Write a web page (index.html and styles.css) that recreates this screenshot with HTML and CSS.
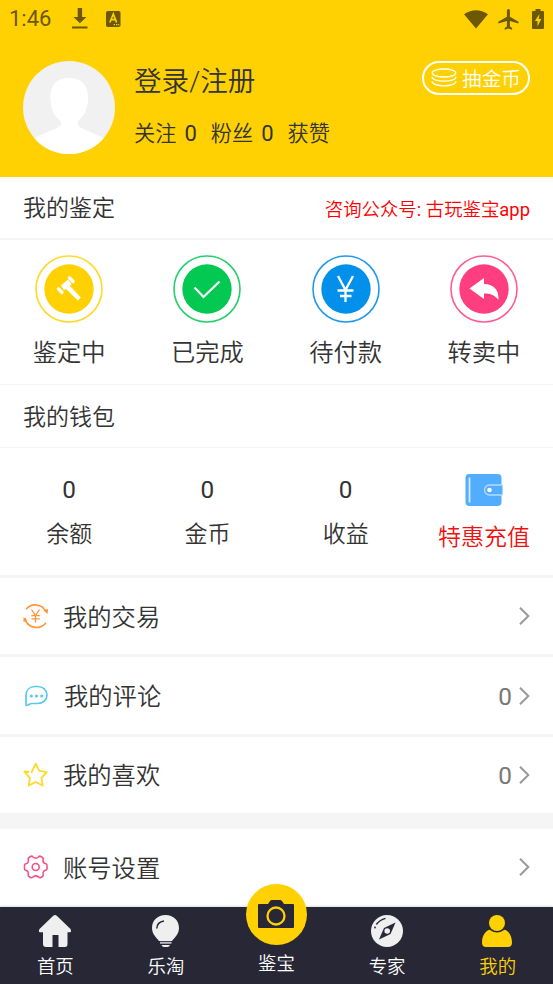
FILE: index.html
```html
<!DOCTYPE html>
<html lang="zh-CN">
<head>
<meta charset="utf-8">
<title>我的</title>
<link rel="stylesheet" href="styles.css">
</head>
<body>
<div class="app">
  <header class="header">
    <div class="status">
      <span class="time">1:46</span>
      <svg class="download" width="16" height="22" viewBox="0 0 16 22"><path d="M5.700 0h4.400v9h4.300L7.900 15.300 1.500 9h4.200zM0 18.500h15.500v2H0z" fill="#6b5800"/></svg>
      <svg class="lang" width="15" height="17" viewBox="0 0 15 17"><rect width="14.500" height="16" rx="1.800" fill="#6b5800"/><path d="M3.900 11.500 7.300 3l3.300 8.500M5.200 8.700h4.200" fill="none" stroke="#ffd103" stroke-width="1.700"/><path d="M7.700 13h1.300v1.300H7.700zM10 13h1.300v1.300H10zM12.200 13h1v1.300h-1z" fill="#ffd103"/></svg>
      <svg class="wifi" width="24" height="19" viewBox="0 0 24 19"><path d="M0 4.200Q12-3.800 24 4.200L12 18.500z" fill="#6b5800"/></svg>
      <svg class="plane" width="21" height="21" viewBox="0 0 21 21"><path d="M8.900 1.600a1.500 1.500 0 0 1 3 0v6.100l8.600 5v1.900l-8.600-2.500v5.300l2.200 1.600v1.700l-3.700-1.100-3.700 1.100V19l2.200-1.600v-5.300L.3 14.600v-1.900l8.600-5z" fill="#6b5800"/></svg>
      <svg class="battery" width="12" height="21" viewBox="0 0 12 21"><path d="M3.500 0h5v2H11q1 0 1 1v16q0 1-1 1H1q-1 0-1-1V3q0-1 1-1h2.500z" fill="#6b5800"/><path d="M7.500 5 2.800 12h2.700v5.300L9.300 10H6.700z" fill="#ffd103"/></svg>
    </div>
    <div class="profile">
      <svg class="avatar" width="92" height="93" viewBox="0 0 92 93"><defs><clipPath id="face"><ellipse cx="46" cy="46.500" rx="46" ry="46.500"/></clipPath></defs><g clip-path="url(#face)"><path d="M0 0h92v93H0z" fill="#f1f1f1"/><path d="M46 17c14 0 20 9 19 22-.5 9-4 16-9.500 20.500-2 4 0 6 3 7.500 8 4 15 6 24 11v15H8V80c7-6 17-8.500 26-13 4-2 5-4 3-7.500C31 55 28 48 27.500 39 26.500 26 32 17 46 17z" fill="#fff"/></g></svg>
      <div class="identity">
        <div class="login">登录/注册</div>
        <div class="counts"><span>关注<b>0</b></span><span>粉丝<b>0</b></span><span>获赞</span></div>
      </div>
      <div class="draw">
        <svg width="26" height="20" viewBox="0 0 26 20" fill="none" stroke="#fff" stroke-width="1.300"><ellipse cx="13" cy="5" rx="11.800" ry="4"/><path d="M1 8.700c0 6 24 6 24 0M1 13.200c0 6.200 24 6.200 24 0"/></svg>
        <span>抽金币</span>
      </div>
    </div>
  </header>

  <section class="title appraisal"><h2>我的鉴定</h2><span class="notice">咨询公众号<b>: </b>古玩鉴宝<b>app</b></span></section>
  <section class="statuses">
    <div class="state"><svg width="68" height="68" viewBox="0 0 68 68"><circle cx="34" cy="34" r="33" fill="none" stroke="#ffd926" stroke-width="1.600"/><circle cx="34" cy="34" r="24.700" fill="#ffd103"/><path d="m26 30.500 7-6 3.500 4.500-1.500 2L45.800 42.500l-3 3L31 34l-2 1z" fill="#fff"/><path d="m34.500 22.800 3.500 3.700M23.500 33.800l3.500 3.700" stroke="#fff" stroke-width="3.400" stroke-linecap="round"/></svg><span>鉴定中</span></div>
    <div class="state"><svg width="68" height="68" viewBox="0 0 68 68"><circle cx="34" cy="34" r="33" fill="none" stroke="#25cf6b" stroke-width="1.600"/><circle cx="34" cy="34" r="24.700" fill="#03c953"/><path d="m21.500 32.500 9 9.500 16-15.500" fill="none" stroke="#fff" stroke-width="2.200"/></svg><span>已完成</span></div>
    <div class="state"><svg width="68" height="68" viewBox="0 0 68 68"><circle cx="34" cy="34" r="33" fill="none" stroke="#2099ec" stroke-width="1.600"/><circle cx="34" cy="34" r="24.700" fill="#0390ea"/><path d="m26 21 7.500 14L41 21M33.500 34v13M25.500 35.500h16M28 41h11.500" fill="none" stroke="#fff" stroke-width="2.300"/></svg><span>待付款</span></div>
    <div class="state"><svg width="68" height="68" viewBox="0 0 68 68"><circle cx="34" cy="34" r="33" fill="none" stroke="#ff5b91" stroke-width="1.600"/><circle cx="34" cy="34" r="24.700" fill="#ff3e80"/><path d="M19.500 33.500 34 23v6c9 0 15 5 14.500 16-4-5-7.500-6.500-14.500-6.500V44z" fill="#fff"/></svg><span>转卖中</span></div>
  </section>

  <section class="title wallet-title"><h2>我的钱包</h2></section>
  <section class="wallet">
    <div class="amount"><b>0</b><span>余额</span></div>
    <div class="amount"><b>0</b><span>金币</span></div>
    <div class="amount"><b>0</b><span>收益</span></div>
    <div class="recharge"><svg width="38" height="34" viewBox="0 0 38 34"><rect x=".5" y="1" width="36" height="32" rx="4" fill="#53adff"/><path d="M4.500 4.500v25" stroke="#d5ebff" stroke-width="1.800"/><path d="M37.500 12H24.500a5 5 0 0 0 0 10H37.500" fill="#53adff" stroke="#b8dcff" stroke-width="1.300"/><circle cx="24.500" cy="17" r="2.300" fill="#fff"/></svg><span>特惠充值</span></div>
  </section>

  <section class="menu">
    <div class="row"><svg class="icon" width="26" height="26" viewBox="0 0 26 26" fill="none" stroke="#ff9537" stroke-width="1.600"><path d="M3 6.300a12 12 0 0 1 20 2.200M23 19.800A12 12 0 0 1 1.800 15"/><path d="M20.300 7.200 25.200 6l-.7 5zM.5 19V14l3.800 3.400z" fill="#ff9537" stroke="none"/><path d="m8.500 6.500 4 6 4-6M12.500 12.500v7M8.300 12.700h8.400M8.300 15.900h8.400" stroke-width="1.300"/></svg><span>我的交易</span><svg class="arrow" width="12" height="20" viewBox="0 0 12 20"><path d="m2 1.700 8.300 8.300L2 18.300"/></svg></div>
    <div class="row comments"><svg class="icon" width="26" height="26" viewBox="0 0 26 26" fill="none" stroke="#58c9ef" stroke-width="1.700"><path d="M3 21.500v-8.700C3 7 6.500 3.500 12 3.500h2.500C20 3.500 24 7 24 12s-4 8.500-9.500 8.500H8L5 22c-1.200.6-2 .5-2-.5z"/><g fill="#58c9ef" stroke="none"><circle cx="8.300" cy="13" r="1.600"/><circle cx="13.500" cy="13" r="1.600"/><circle cx="18.800" cy="13" r="1.600"/></g></svg><span>我的评论</span><b>0</b><svg class="arrow" width="12" height="20" viewBox="0 0 12 20"><path d="m2 1.700 8.300 8.300L2 18.300"/></svg></div>
    <div class="row"><svg class="icon" width="26" height="26" viewBox="0 0 26 26" fill="none" stroke="#ffd927" stroke-width="1.800" stroke-linejoin="round" stroke-linecap="round"><path d="M5.500 10 1.300 9.500l5.500 6.300-1 7.700 6.900-3.500 6.900 3.500-1.100-7.700 5.300-5.700-7.500-1.300-3.600-7.200-2.800 6-1.200 2.500"/></svg><span>我的喜欢</span><b>0</b><svg class="arrow" width="12" height="20" viewBox="0 0 12 20"><path d="m2 1.700 8.300 8.300L2 18.300"/></svg></div>
    <div class="row settings"><svg class="icon" width="26" height="26" viewBox="0 0 26 26" fill="none" stroke="#f75085" stroke-width="1.600" stroke-linejoin="round"><path d="M7.500 2.500Q8.800 1.500 10 3q2.700 2.200 5.400 0 1.200-1.500 2.600-.5l1.500 1q1.200.7.600 2-.5 3.700 2.700 4.300Q24 10 24 11.500v3q0 1.500-1.300 1.700-3.200.6-2.600 4.300.5 1.300-.7 2l-1.500 1q-1.300.7-2.400-.5-2.800-2.200-5.500 0-1.200 1.200-2.500.500l-1.500-1q-1.200-.7-.7-2 .5-3.700-2.600-4.300Q1.500 16 1.500 14.500v-3q0-1.500 1.200-1.700Q6 9.200 5.300 5.500q-.5-1.300.7-2z"/><circle cx="12.700" cy="13" r="3.500"/></svg><span>账号设置</span><svg class="arrow" width="12" height="20" viewBox="0 0 12 20"><path d="m2 1.700 8.300 8.300L2 18.300"/></svg></div>
  </section>

  <nav class="tabs">
    <div class="tab"><svg width="34" height="34" viewBox="0 0 34 34"><path d="M15 2q2-2 4 0l13.500 13q1.300 3-.5 3.200h-2.500V30q0 3-2.500 3h-6.500V21h-6v12H8q-3 0-3-3V18.200H2Q0 18 1.500 15z" fill="#efefef"/></svg><span>首页</span></div>
    <div class="tab"><svg width="34" height="34" viewBox="0 0 34 34"><path d="M16.500 1c8 0 13.500 5.500 13.500 13 0 6-4 9-7 13H10C7 23 3 20 3 14 3 6.500 8.500 1 16.500 1zM12.500 31h8.500q-.8 2-2.500 2H15q-1.700 0-2.500-2z" fill="#efefef"/><path d="M11 28.800h11.500" stroke="#b9b9c0" stroke-width="2"/><path d="M7.800 14.500Q8 8 15 7" fill="none" stroke="#282736" stroke-width="1.500"/></svg><span>乐淘</span></div>
    <div class="tab camera"><div class="disc"><svg width="38" height="30" viewBox="0 0 38 30"><path d="M2 5h9l2-3q.6-1 2-1h8q1 0 2 1l2 3h9q1 0 1 1v22q0 1-1 1H2q-1 0-1-1V6q0-1 1-1z" fill="#282736"/><circle cx="19" cy="17" r="8.500" fill="none" stroke="#ffd103" stroke-width="2.300"/></svg></div><span>鉴宝</span></div>
    <div class="tab"><svg width="34" height="34" viewBox="0 0 34 34"><circle cx="17" cy="17" r="16" fill="#efefef"/><path d="m25.500 8.500-5 11.500-11.500 5.500L14 14z" fill="#282736"/><circle cx="17.200" cy="17" r="2.800" fill="#efefef"/><path d="M6.300 10.500Q9.500 6 15.500 4.300" fill="none" stroke="#282736" stroke-width="1.300"/><circle cx="5" cy="13.500" r=".9" fill="#282736"/></svg><span>专家</span></div>
    <div class="tab active"><svg width="34" height="34" viewBox="0 0 34 34"><circle cx="16" cy="9" r="8" fill="#ffd103"/><path d="M8.500 15.700q7.500 5.500 15 0c4 1 7.500 6 7.500 12.800 0 3-1.500 4.500-4 4.500H5c-2.500 0-4-1.500-4-4.500 0-6.800 3.500-11.800 7.500-12.800z" fill="#ffd103"/></svg><span>我的</span></div>
  </nav>
</div>
</body>
</html>
```
FILE: styles.css
```css
* { box-sizing: border-box; }
body { margin: 0; background: #fff; color: #333; font-family: Roboto, "Noto Sans CJK SC", sans-serif; font-weight: 350; }
svg { display: block; flex: none; }
b { font-weight: 400; }
.app { height: 984px; display: flex; flex-direction: column; overflow: hidden; }
.header { height: 177px; flex: none; background: #ffd103; }
.status { height: 38px; display: flex; align-items: center; padding: 0 9px; }
.time { width: 63px; color: #6b5800; font-size: 22px; font-weight: 400; line-height: 38px; }
.lang { margin-left: 18px; }
.wifi { margin-left: auto; }
.plane { margin-left: 10px; }
.battery { margin-left: 13px; }
.profile { display: flex; padding: 23px 23px 0; }
.identity { margin-left: 19px; }
.login { height: 40px; line-height: 42px; font-size: 27.600px; }
.counts { display: flex; gap: 14px; margin-top: 11px; height: 40px; line-height: 44px; font-size: 21.200px; white-space: nowrap; }
.counts b { margin-left: 8px; font-size: 22px; }
.draw { width: 108px; height: 34px; margin-left: auto; border: 2px solid #fff; border-radius: 17px; display: flex; align-items: center; justify-content: center; gap: 5px; color: #fff; font-size: 19.600px; line-height: 30px; }
.draw span { padding-top: 3px; }
.title { flex: none; display: flex; align-items: center; justify-content: space-between; padding: 0 23px; }
.title h2 { margin: 0; padding-top: 2px; font-size: 23px; font-weight: 350; line-height: 60px; }
.appraisal { height: 63px; border-bottom: 2px solid #f5f5f5; }
.notice { color: #f00; font-size: 18.400px; }
.statuses { flex: none; height: 144px; display: grid; grid-template-columns: repeat(4, 1fr); }
.state { display: flex; flex-direction: column; align-items: center; padding-top: 15px; font-size: 24.300px; line-height: 36px; gap: 12px; }
.wallet-title { height: 64px; border: solid #f5f5f5; border-width: 1px 0; }
.wallet-title h2 { padding-top: 3px; }
.wallet { flex: none; height: 127px; display: grid; grid-template-columns: repeat(4, 1fr); text-align: center; font-size: 23px; }
.amount { display: flex; flex-direction: column; align-items: center; padding-top: 24px; }
.amount b { height: 36px; line-height: 36px; font-size: 24.300px; }
.amount span { margin-top: 9px; line-height: 36px; }
.recharge { display: flex; flex-direction: column; align-items: center; padding-top: 25px; gap: 13px; line-height: 36px; color: #f01010; white-space: nowrap; }
.menu { flex: none; }
.row { height: 79.400px; border-top: 3px solid #f5f5f5; padding: 0 23px; display: flex; align-items: center; font-size: 24.300px; }
.row span { padding-bottom: 2px; }
.icon { margin-right: 14px; }
.comments .icon { margin-right: 15px; }
.row b { margin-left: auto; margin-right: 6px; padding-top: 1px; color: #777; font-size: 24.300px; }
.arrow { fill: none; stroke: #999; stroke-width: 2; }
.row span + .arrow { margin-left: auto; }
.row.settings { height: 93.800px; border-top-width: 16px; padding-bottom: 2px; }
.tabs { position: relative; flex: none; height: 77px; background: #282736; box-shadow: 0 -1px 2px #ddd; display: grid; grid-template-columns: repeat(5, 1fr); color: #fff; font-size: 18.400px; line-height: 28px; }
.tab { display: flex; flex-direction: column; align-items: center; padding-top: 7px; gap: 5px; }
.tab.camera { margin-top: -23px; padding-top: 0; }
.disc { width: 61px; height: 61px; border-radius: 50%; background: #ffd103; display: flex; align-items: center; justify-content: center; }
.active { color: #ffd103; }
```
